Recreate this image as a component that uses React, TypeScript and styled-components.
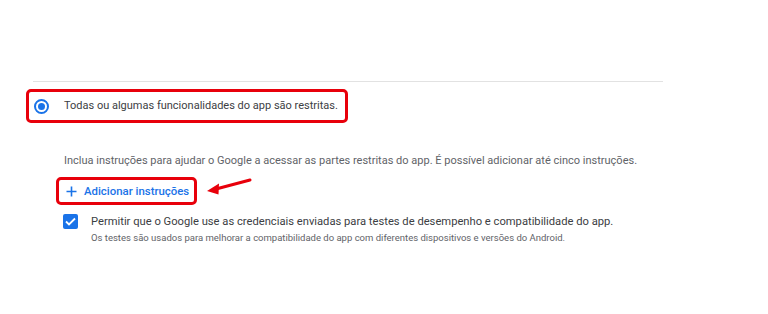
import React from 'react'
import styled, { createGlobalStyle } from 'styled-components'

const GlobalStyle = createGlobalStyle`
    body {
        margin: 0;
        background: #ffffff;
        font-family: Roboto, "Liberation Sans", Arial, sans-serif;
    }
`

const Page = styled.div`
    width: 768px;
    height: 314px;
    padding-top: 81px;
    padding-left: 33px;
    box-sizing: border-box;
`

const Section = styled.div`
    width: 630px;
    display: flex;
    flex-direction: column;
    align-items: flex-start;
`

const Divider = styled.div`
    width: 100%;
    height: 1px;
    background: #e2e2e2;
`

const Highlight = styled.div<{ $left: number; $top: number }>`
    display: inline-flex;
    align-items: center;
    margin-left: ${p => p.$left}px;
    margin-top: ${p => p.$top}px;
    border: 3px solid #e8000b;
    border-radius: 5px;
    box-sizing: border-box;
`

const RadioRow = styled.label`
    display: flex;
    align-items: center;
    gap: 15px;
    height: 28px;
    padding: 0 7px 0 5px;
`

const Radio = styled.span`
    width: 15px;
    height: 15px;
    border: 2px solid #1a73e8;
    border-radius: 50%;
    box-sizing: border-box;
    display: flex;
    align-items: center;
    justify-content: center;
    &::after {
        content: '';
        width: 7px;
        height: 7px;
        border-radius: 50%;
        background: #1a73e8;
    }
`

const MainText = styled.span<{ $size: number }>`
    font-size: ${p => p.$size}px;
    line-height: 16px;
    color: #3c4043;
    white-space: nowrap;
`

const Hint = styled.p`
    margin: 30px 0 0 31px;
    font-size: 11px;
    line-height: 16px;
    color: #5f6368;
    white-space: nowrap;
`

const ActionRow = styled.div`
    display: flex;
    align-items: center;
    margin-left: 23px;
    margin-top: 8px;
`

const AddButton = styled.button`
    display: flex;
    align-items: center;
    gap: 7px;
    height: 22px;
    padding: 0 5px 0 7px;
    border: none;
    background: none;
    font-family: inherit;
    font-size: 11.4px;
    font-weight: 500;
    color: #1a73e8;
    cursor: pointer;
`

const Arrow = styled.svg`
    margin-left: 9px;
    margin-top: -8px;
`

const CheckRow = styled.div`
    display: flex;
    align-items: flex-start;
    gap: 13px;
    margin: 9px 0 0 30px;
`

const Checkbox = styled.span`
    width: 15px;
    height: 15px;
    margin-top: 0;
    border-radius: 2px;
    background: #1a73e8;
    display: flex;
    align-items: center;
    justify-content: center;
    flex-shrink: 0;
`

const CheckText = styled.div`
    display: flex;
    flex-direction: column;
    gap: 1px;
`

const SubText = styled.span`
    font-size: 9.5px;
    line-height: 14px;
    color: #5f6368;
    white-space: nowrap;
`

const App: React.FC = () => {
    return (
        <Page>
            <GlobalStyle />
            <Section>
                <Divider />
                <Highlight $left={-7} $top={7}>
                    <RadioRow>
                        <Radio />
                        <MainText $size={11}>Todas ou algumas funcionalidades do app são restritas.</MainText>
                    </RadioRow>
                </Highlight>
                <Hint>Inclua instruções para ajudar o Google a acessar as partes restritas do app. É possível adicionar até cinco instruções.</Hint>
                <ActionRow>
                    <Highlight $left={0} $top={0}>
                        <AddButton>
                            <svg width="11" height="11" viewBox="0 0 11 11">
                                <path d="M5.5 0.5v10M0.5 5.5h10" stroke="#1a73e8" strokeWidth="1.6" />
                            </svg>
                            Adicionar instruções
                        </AddButton>
                    </Highlight>
                    <Arrow width="46" height="18" viewBox="0 0 46 18">
                        <path d="M44 2L10 11" stroke="#e8000b" strokeWidth="3" strokeLinecap="round" />
                        <path d="M1 13L13 5.5L12.5 16.5Z" fill="#e8000b" />
                    </Arrow>
                </ActionRow>
                <CheckRow>
                    <Checkbox>
                        <svg width="11" height="9" viewBox="0 0 11 9">
                            <path d="M1 4.5L4 7.5L10 1.5" stroke="#fff" strokeWidth="1.8" fill="none" />
                        </svg>
                    </Checkbox>
                    <CheckText>
                        <MainText $size={11.2}>Permitir que o Google use as credenciais enviadas para testes de desempenho e compatibilidade do app.</MainText>
                        <SubText>Os testes são usados para melhorar a compatibilidade do app com diferentes dispositivos e versões do Android.</SubText>
                    </CheckText>
                </CheckRow>
            </Section>
        </Page>
    )
}

export default App
